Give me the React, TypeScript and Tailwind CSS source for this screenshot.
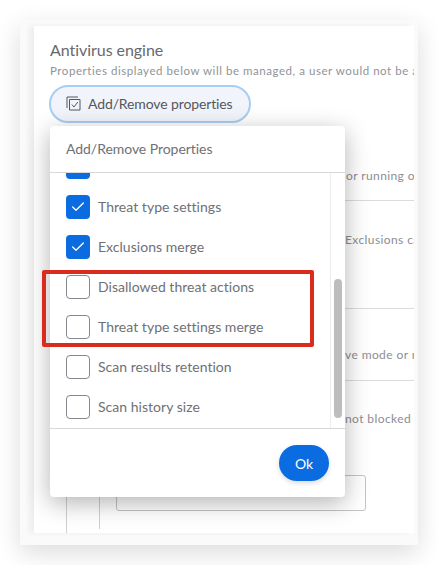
import { Check } from "lucide-react";

const items = [
  { label: "Exclusions", on: true },
  { label: "Threat type settings", on: true },
  { label: "Exclusions merge", on: true },
  { label: "Disallowed threat actions", on: false },
  { label: "Threat type settings merge", on: false },
  { label: "Scan results retention", on: false },
  { label: "Scan history size", on: false },
];

function PropsIcon() {
  return (
    <svg width="15" height="15" viewBox="0 0 15 15" fill="none" stroke="#55585c" strokeWidth="1">
      <path d="M3.5 14V3.5H14V14H3.5Z" />
      <path d="M1 12V1H12" />
      <path d="M5.8 8.6L8 11L11.8 6" />
    </svg>
  );
}

export default function App() {
  return (
    <div className="relative h-[565px] w-[438px] overflow-hidden bg-white font-['Lato',sans-serif]">
      <div className="ml-5 mt-5 h-[525px] w-[398px] bg-[#fafafa] pl-[14px] pt-[6px] shadow-[0_8px_24px_rgba(0,0,0,0.14)]">
        <div className="h-[507px] w-[380px] overflow-hidden bg-white pl-4 shadow-[-5px_0_6px_rgba(0,0,0,0.05)]">
          <h2 className="pt-[14px] text-[16px] leading-5 tracking-[-0.05px] text-[#66696d]">Antivirus engine</h2>
          <p className="mt-[3px] whitespace-nowrap text-[11.5px] leading-4 tracking-[0.55px] text-[#909397]">
            Properties displayed below will be managed, a user would not be able to change
          </p>
          <button className="mt-[6px] -ml-[1px] flex h-[38px] w-[202px] items-center gap-[7px] rounded-full border-2 border-[#a9cdf0] bg-[#f1f4fa] pb-[2px] pl-[15px] text-[14px] tracking-[-0.12px] text-[#55585c]">
            <PropsIcon />
            Add/Remove properties
          </button>

          <div className="whitespace-nowrap text-[12px] tracking-[0.4px] text-[#8b8e92]">
            <div className="ml-[296px] mt-[45px] h-[32px] leading-4">or running on</div>
            <div className="h-[108px] border-t border-[#dcdcdc] pl-[295px] pt-[31px] leading-4">Exclusions can</div>
            <div className="h-[72px] border-t border-[#dcdcdc] pl-[295px] pt-[38px] leading-4">ve mode or not</div>
            <div className="h-[95px] border-t border-[#dcdcdc] pl-[295px] pt-[30px] leading-4">not blocked by</div>
          </div>
          <div className="flex h-[60px]">
            <div className="ml-4 w-[33px] border-l border-[#cfcfcf]" />
            <div className="mb-[6px] w-[17px] border-l border-[#cfcfcf]" />
            <div className="h-[36px] w-[250px] rounded-[3px] border border-[#c4c4c4]" />
          </div>
        </div>
      </div>

      {/* popover */}
      <div className="absolute left-[50px] top-[126px] flex h-[371px] w-[295px] flex-col rounded-[4px] bg-white shadow-[0_6px_24px_rgba(0,0,0,0.3)]">
        <div className="h-[47px] border-b border-[#d8d8d8] pl-4 pt-[13px] text-[14px] leading-5 tracking-[-0.05px] text-[#6e7175]">
          Add/Remove Properties
        </div>
        <div className="flex h-[255px]">
          <div className="flex-1 overflow-hidden pl-4">
            <div className="-mt-[26px]">
              {items.map((it) => (
                <div key={it.label} className="flex h-10 items-center gap-2">
                  {it.on ? (
                    <span className="flex h-6 w-6 items-center justify-center rounded-[4px] bg-[#0a6ce0]">
                      <Check size={16} color="#fff" strokeWidth={2} />
                    </span>
                  ) : (
                    <span className="h-6 w-6 rounded-[4px] border border-[#85888c] bg-white" />
                  )}
                  <span className="-mt-[1px] text-[14px] tracking-[0.03px] text-[#6e7175]">{it.label}</span>
                </div>
              ))}
            </div>
          </div>
          <div className="w-[15px] border-l border-[#ececec] pl-[3px] pt-[106px]">
            <div className="h-[139px] w-2 rounded-full bg-[#bdbdbd]" />
          </div>
        </div>
        <div className="flex flex-1 justify-end border-t border-[#d8d8d8] pr-4 pt-4">
          <button className="h-9 w-[50px] rounded-full bg-[#0a6ce0] text-[14px] text-white shadow-[0_2px_5px_rgba(0,0,0,0.15)]">
            Ok
          </button>
        </div>
      </div>

      {/* red highlight */}
      <div className="absolute left-[42px] top-[270px] h-[77px] w-[272px] rounded-[2px] border-4 border-[#d92c1c]" />
    </div>
  );
}
